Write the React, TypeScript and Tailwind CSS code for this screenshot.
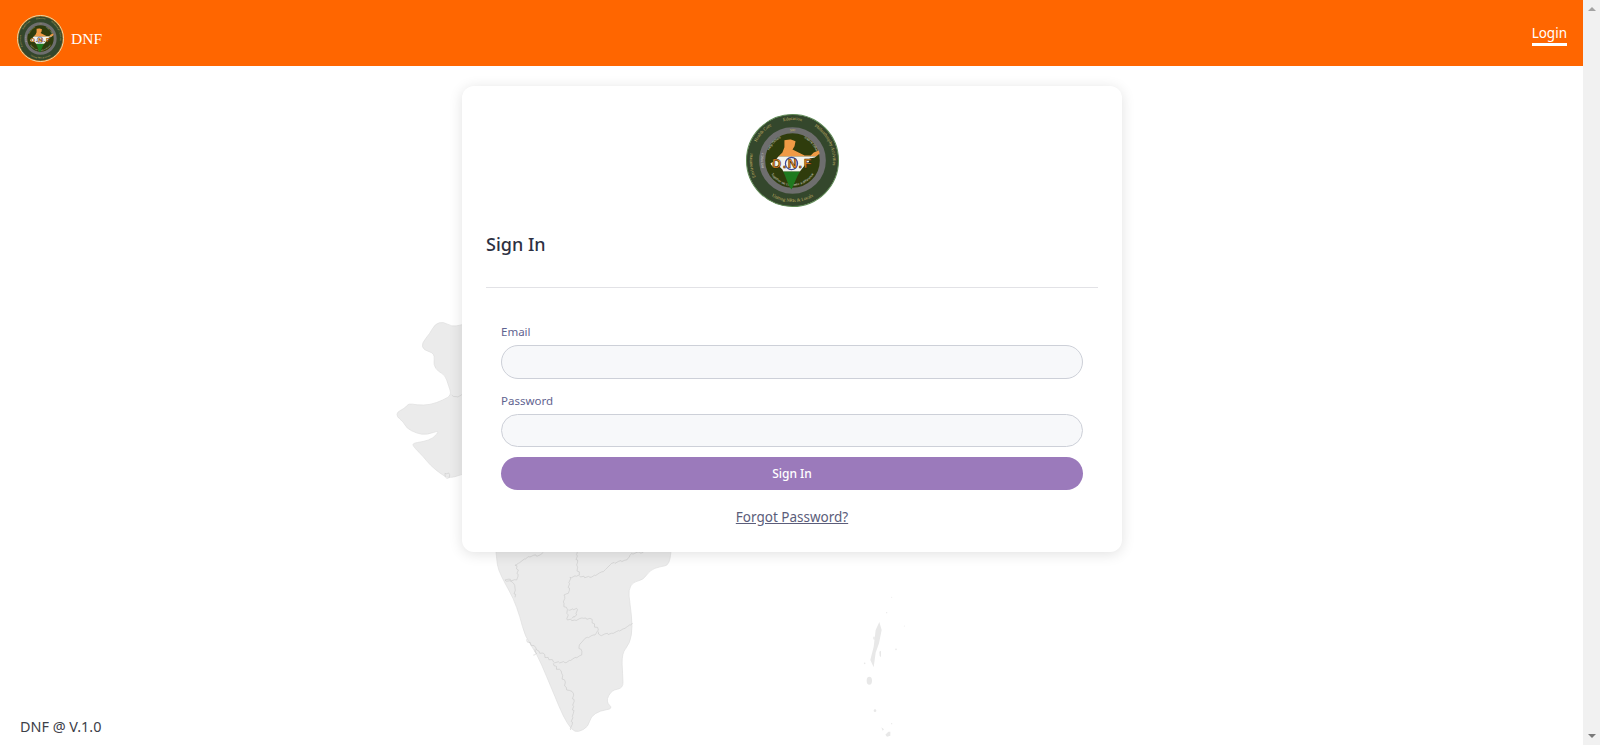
import React from 'react';

type Pt = [number, number];

// rounded outline through the points
const smooth = (pts: Pt[]) => {
  let d = `M${pts[0][0]} ${pts[0][1]}`;
  for (let i = 1; i < pts.length - 1; i++) {
    const mx = (pts[i][0] + pts[i + 1][0]) / 2;
    const my = (pts[i][1] + pts[i + 1][1]) / 2;
    d += `Q${pts[i][0]} ${pts[i][1]} ${mx} ${my}`;
  }
  const last = pts[pts.length - 1];
  return `${d}L${last[0]} ${last[1]}Z`;
};

// wobbly state border
const rough = (pts: Pt[]) => {
  let d = `M${pts[0][0]} ${pts[0][1]}`;
  let n = 0;
  for (let i = 1; i < pts.length; i++) {
    const [ax, ay] = pts[i - 1];
    const [bx, by] = pts[i];
    const steps = Math.max(1, Math.round(Math.hypot(bx - ax, by - ay) / 7));
    for (let s = 1; s <= steps; s++) {
      n++;
      const off = s === steps ? 0 : [2.5, -2, 1, -3, 2][n % 5];
      d += `L${ax + ((bx - ax) * s) / steps + off} ${ay + ((by - ay) * s) / steps - off}`;
    }
  }
  return d;
};

const gujarat: Pt[] = [
  [300, 60], [245, 75], [215, 80], [190, 65], [165, 72], [150, 100], [125, 130], [130, 150], [165, 160], [160, 195],
  [175, 215], [195, 225], [205, 255], [215, 285], [190, 300], [150, 315], [110, 315], [85, 310], [75, 325], [52, 335],
  [50, 350], [70, 365], [80, 385], [110, 400], [140, 405], [180, 390], [160, 415], [130, 425], [95, 430], [105, 445],
  [130, 470], [150, 495], [180, 520], [205, 535], [245, 525], [300, 500],
];

const south: Pt[] = [
  [165, 60], [170, 120], [175, 150], [195, 190], [220, 235], [240, 290], [255, 350], [290, 400], [320, 470], [345, 530],
  [370, 590], [395, 630], [415, 637], [445, 620], [452, 590], [480, 572], [520, 566], [497, 545], [515, 510], [550, 505],
  [548, 465], [545, 400], [570, 370], [578, 320], [570, 250], [565, 210], [580, 185], [610, 180], [630, 150], [660, 140],
  [690, 135], [695, 60],
];

const borders: Pt[][] = [
  [[310, 97], [300, 105], [265, 110], [235, 130], [225, 135], [235, 150], [230, 180], [195, 180]],
  [[195, 180], [215, 185], [225, 205], [225, 232]],
  [[412, 96], [410, 135], [418, 165], [390, 172], [385, 220], [372, 225], [372, 250], [385, 285], [382, 300], [405, 300], [430, 295], [450, 295], [475, 330], [465, 345], [435, 355], [418, 375], [425, 405], [375, 428], [340, 425], [290, 390], [260, 358]],
  [[418, 168], [450, 172], [490, 155], [515, 130], [560, 120], [575, 100], [610, 97]],
  [[475, 335], [480, 345], [520, 340], [555, 325], [578, 310]],
  [[340, 430], [365, 460], [380, 510], [400, 520], [400, 580], [392, 630]],
  [[385, 270], [410, 265], [410, 285], [395, 295]],
  [[285, 388], [290, 400], [280, 405]],
];

const Logo = ({ id, className }: { id: string; className: string }) => (
  <svg viewBox="0 0 92 92" className={className}>
    <defs>
      <path id={`${id}-cw`} d="M46 86a40 40 0 0 1 0-80a40 40 0 0 1 0 80" />
      <path id={`${id}-ccw`} d="M5 46a41 41 0 0 0 82 0" />
      <path id={`${id}-ring`} d="M46 75a29 29 0 0 1 0-58a29 29 0 0 1 0 58" />
      <path id={`${id}-in`} d="M46 71a25 25 0 0 1 0-50a25 25 0 0 1 0 50" />
      <path id={`${id}-low`} d="M21 46a25 25 0 0 0 50 0" />
      <clipPath id={`${id}-india`}>
        <path d="M38 26l6-1 5 2-1 5-2 3 6 3 6 3 6 0 3-3 5-2 1 3-5 4-5 1-1 4-4 3-4 5-3 5-3 7-3 7-3-5-3-8-3-7-3-3-6 1-3-4 5-3 3-4 4-4 2-5z" />
      </clipPath>
    </defs>
    <circle cx="46" cy="46" r="45.5" fill="#34472c" stroke="#5f8a55" strokeWidth="1" />
    <circle cx="46" cy="46" r="30" fill="#2f3c0c" stroke="#6e6e6e" strokeWidth="6" />
    <g fontSize="4.6" fill="#c9b566" fontFamily="Liberation Serif, serif">
      <text><textPath href={`#${id}-cw`} startOffset="23%" textAnchor="middle">Environment</textPath></text>
      <text><textPath href={`#${id}-cw`} startOffset="37%" textAnchor="middle">Health Care</textPath></text>
      <text><textPath href={`#${id}-cw`} startOffset="50%" textAnchor="middle">Education</textPath></text>
      <text><textPath href={`#${id}-cw`} startOffset="68%" textAnchor="middle">Philanthrophy Activities</textPath></text>
      <text><textPath href={`#${id}-ccw`} startOffset="50%" textAnchor="middle">Uniting NRIs &amp; Locals</textPath></text>
    </g>
    <g fontSize="3.2" fill="#d8d8d0" fontFamily="Liberation Sans, sans-serif">
      <text><textPath href={`#${id}-ring`} startOffset="50%" textAnchor="middle" fill="#c9b566">SRI</textPath></text>
      <text><textPath href={`#${id}-ring`} startOffset="25%" textAnchor="middle">DISTRICT</textPath></text>
      <text><textPath href={`#${id}-in`} startOffset="37%" textAnchor="middle">Help Others</textPath></text>
      <text><textPath href={`#${id}-in`} startOffset="64%" textAnchor="middle">Inspire Others</textPath></text>
      <text><textPath href={`#${id}-low`} startOffset="50%" textAnchor="middle">Together we can make a difference</textPath></text>
    </g>
    <g clipPath={`url(#${id}-india)`}>
      <rect x="15" y="20" width="65" height="22" fill="#f09a45" />
      <rect x="15" y="42" width="65" height="15" fill="#f4f4ee" />
      <rect x="15" y="57" width="65" height="20" fill="#1f7a1f" />
    </g>
    <circle cx="45" cy="49" r="6" fill="none" stroke="#3a4a9a" strokeWidth="1.2" />
    <text x="46" y="53" textAnchor="middle" fontSize="12.5" fontWeight="700" fill="#ee8a14" stroke="#1a1a1a" strokeWidth=".5" fontFamily="Liberation Sans, sans-serif" letterSpacing="1.6">
      D.N.F
    </text>
  </svg>
);

const IndiaMap = () => (
  <svg width="1583" height="745" viewBox="0 0 1583 745" className="absolute left-0 top-0">
    <g transform="translate(380 300) scale(.33333)">
      <path d={smooth(gujarat)} fill="#ebebeb" stroke="#dedede" strokeWidth="2" />
      <path d={rough([[215, 285], [230, 290], [250, 284]])} fill="none" stroke="#c8c8c8" strokeWidth="1.6" />
      <path d={rough([[195, 520], [200, 535], [208, 533], [206, 519], [195, 520]])} fill="none" stroke="#c8c8c8" strokeWidth="1.6" />
    </g>
    <g transform="translate(440 520) scale(.33333)">
      <path d={smooth(south)} fill="#ebebeb" stroke="#dedede" strokeWidth="2" />
      {borders.map((b, i) => (
        <path key={i} d={rough(b)} fill="none" stroke="#c4c4c4" strokeWidth="1.6" />
      ))}
    </g>
    <g transform="translate(840 580) scale(.33333)" fill="#e8e8e8">
      <path d="M118 126l7 24-8 40-10 28-6 44-10-22 10-40 6-50z" />
      <ellipse cx="88" cy="302" rx="8" ry="12" />
      <circle cx="105" cy="392" r="4" />
      <circle cx="74" cy="250" r="2.5" />
      <circle cx="168" cy="208" r="2.5" />
      <circle cx="140" cy="98" r="2" />
      <circle cx="155" cy="52" r="1.5" />
      <circle cx="193" cy="138" r="1.5" />
      <path d="M118 215l5-3 0 20-4-5zM100 170l4 0 0 10-4-2z" />
      <path d="M145 455l6 0 0 12-10 3-5-6zM124 442l8 6-4 4z" />
      <circle cx="155" cy="431" r="2" />
    </g>
  </svg>
);

export default function App() {
  return (
    <div className="flex h-[745px] overflow-hidden bg-white font-['Noto_Sans','Open_Sans',sans-serif]">
      <div className="relative flex min-w-0 flex-1 flex-col">
        <IndiaMap />
        <header className="relative flex h-[66px] items-center justify-between bg-[#ff6600] pl-[17px] pr-4">
          <div className="mt-[11px] flex items-center gap-[7px]">
            <Logo id="nav-logo" className="h-[47px] w-[47px] rounded-full border border-[#e8d9a8]" />
            <span className="font-['Liberation_Serif',serif] text-[15.5px] text-white">DNF</span>
          </div>
          <a className="mt-[3px] border-b-[3px] border-white text-[13.5px] leading-[20px] text-white">Login</a>
        </header>

        <div className="relative ml-[462px] mt-[20px] flex h-[466px] w-[660px] flex-col rounded-xl bg-white px-6 shadow-[0_2px_14px_rgba(0,0,0,0.12)]">
          <Logo id="card-logo" className="mx-auto mt-7 h-[93px] w-[93px] shrink-0" />
          <h1 className="mt-[23px] text-[18px] font-medium leading-[28px] text-[#2d3142]">Sign In</h1>
          <hr className="mt-[29px] border-[#e2e2e6]" />
          <form className="mt-[34px] flex flex-col px-[15px]">
            <label className="text-[11.5px] leading-[20px] text-[#5f6390]">Email</label>
            <input className="mt-[3px] h-[34px] rounded-full border border-[#cdd0d8] bg-[#f7f8fa]" />
            <label className="mt-[12px] text-[11.5px] leading-[20px] text-[#5f6390]">Password</label>
            <input type="password" className="mt-[3px] h-[33px] rounded-full border border-[#cdd0d8] bg-[#f7f8fa]" />
            <button type="button" className="mt-[10px] h-[33px] rounded-full bg-[#9b7abb] text-[12px] font-medium text-white">
              Sign In
            </button>
            <a className="mt-[17px] text-center text-[13.5px] leading-[20px] text-[#5b5d7a] underline">Forgot Password?</a>
          </form>
        </div>

        <footer className="relative mt-auto pb-[8px] pl-5 text-[14.4px] leading-[20px] text-[#3d4048]">DNF @ V.1.0</footer>
      </div>

      {/* page scrollbar */}
      <div className="flex w-[17px] shrink-0 flex-col items-center justify-between bg-[#f1f1f1] py-[7px]">
        <div className="h-0 w-0 border-x-[4px] border-b-[4px] border-x-transparent border-b-[#a3a3a3]" />
        <div className="h-0 w-0 border-x-[4px] border-t-[4px] border-x-transparent border-t-[#7a7a7a]" />
      </div>
    </div>
  );
}
